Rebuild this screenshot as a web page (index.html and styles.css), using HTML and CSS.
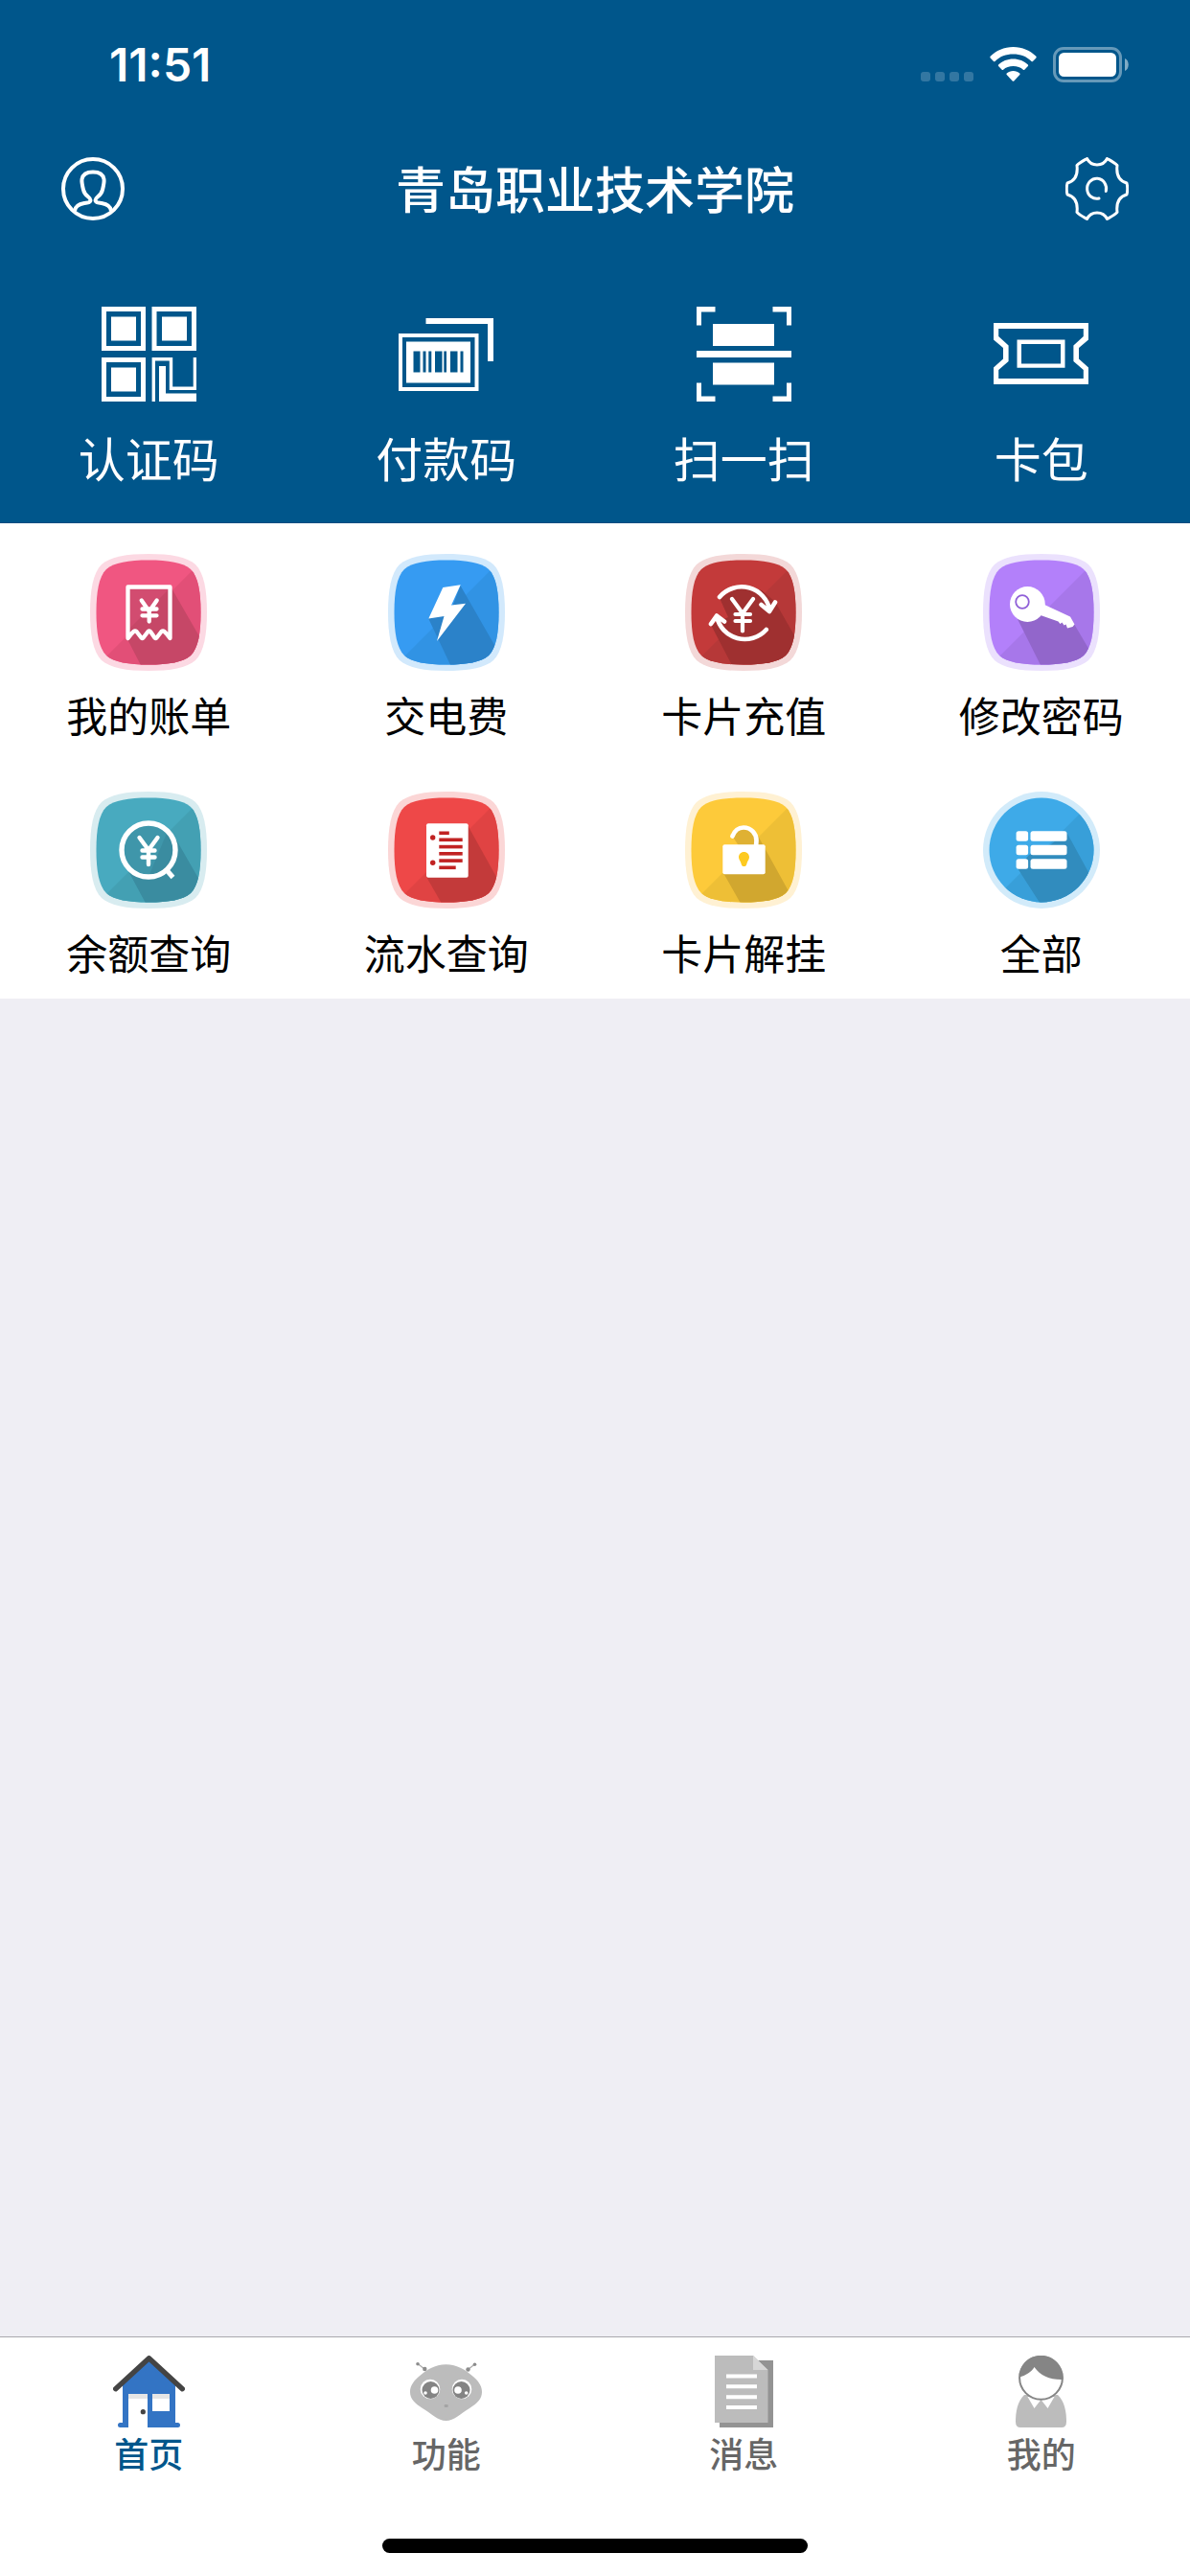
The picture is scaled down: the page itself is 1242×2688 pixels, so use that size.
FILE: index.html
```html
<!DOCTYPE html>
<html lang="zh-Hans">
<head>
  <meta charset="UTF-8" />
  <meta name="viewport" content="width=device-width, initial-scale=1.0" />
  <title>青岛职业技术学院</title>
  <link rel="stylesheet" href="styles.css">
</head>
<body>
  <!-- 共用图形 -->
  <svg class="defs" width="0" height="0" aria-hidden="true">
    <defs>
      <path id="tile" d="M61 0C84 0 101 3 110 11C119 20 122 38 122 61C122 84 119 102 110 111C101 119 84 122 61 122C38 122 21 119 12 111C3 102 0 84 0 61C0 38 3 20 12 11C21 3 38 0 61 0Z" />
      <path id="tileInner" d="M61 6.500C82 6.500 97 9 105 16C113 24 115.500 40 115.500 61C115.500 82 113 98 105 106C97 113 82 115.500 61 115.500C40 115.500 25 113 17 106C9 98 6.500 82 6.500 61C6.500 40 9 24 17 16C25 9 40 6.500 61 6.500Z" />
      <clipPath id="tileClip"><use href="#tileInner" /></clipPath>
      <clipPath id="roundClip"><circle cx="61" cy="61" r="54.5" /></clipPath>
    </defs>
  </svg>

  <div class="app">
    <header class="header">
      <div class="status-bar">
        <span class="time">11:51</span>
        <div class="status-icons">
          <svg width="55" height="37" viewBox="0 0 55 37" fill="#fff" fill-opacity=".2">
            <rect x="0" y="26" width="10" height="10" rx="3" />
            <rect x="15" y="26" width="10" height="10" rx="3" />
            <rect x="30" y="26" width="10" height="10" rx="3" />
            <rect x="45" y="26" width="10" height="10" rx="3" />
          </svg>
          <svg width="49" height="37" viewBox="0 0 49 37" fill="#fff">
            <path d="M24.500 0C34 0 42.500 3.800 48.400 9.800Q49 10.600 48.400 11.400L45 15Q44.300 15.600 43.500 15C38.500 10 32 7.600 24.500 7.600C17 7.600 10.500 10 5.500 15Q4.700 15.600 4 15L.6 11.400Q0 10.600 .6 9.800C6.500 3.800 15 0 24.500 0Z" />
            <path d="M24.500 12.500C30.500 12.500 36 14.700 39.900 18.500Q40.500 19.200 39.900 20L36.300 23.700Q35.600 24.300 34.900 23.700C32.200 21.300 28.600 20 24.500 20C20.400 20 16.800 21.300 14.100 23.700Q13.400 24.300 12.700 23.700L9.100 20Q8.500 19.200 9.100 18.500C13 14.700 18.500 12.500 24.500 12.500Z" />
            <path d="M24.500 25C27.200 25 29.500 26 31.300 27.600Q31.900 28.300 31.300 29L25.300 35.500Q24.500 36.200 23.700 35.500L17.700 29Q17.100 28.300 17.700 27.600C19.500 26 21.800 25 24.500 25Z" />
          </svg>
          <svg width="79" height="37" viewBox="0 0 79 37">
            <rect x="1.500" y="1.500" width="69" height="34" rx="9.500" fill="none" stroke="#fff" stroke-opacity=".4" stroke-width="3" />
            <rect x="6" y="6" width="60" height="25" rx="5.500" fill="#fff" />
            <path d="M75 12C80 14 80 23 75 25Z" fill="#fff" fill-opacity=".5" />
          </svg>
        </div>
      </div>

      <div class="nav-bar">
        <button type="button" class="icon-btn" aria-label="个人">
          <svg width="66" height="66" viewBox="0 0 66 66" fill="none" stroke="#fff" stroke-width="4">
            <circle cx="33" cy="33" r="31" />
            <path d="M14 56C14.500 51 18 49 24 48C28 47.400 30.500 47.500 30.500 45C30.500 41.500 24.500 41 23 34C22 30 21 26 21.500 23C22.500 17.500 27 15.500 33 15.500C39 15.500 43.500 17.500 44.500 23C45 26 44 30 43 34C41.500 41 35.500 41.500 35.500 45C35.500 47.500 38 47.400 42 48C48 49 51.500 51 52 56" />
          </svg>
        </button>
        <h1 class="title">青岛职业技术学院</h1>
        <button type="button" class="icon-btn" aria-label="设置">
          <svg width="66" height="66" viewBox="0 0 66 66" fill="none" stroke="#fff" stroke-width="3" stroke-linejoin="round" stroke-linecap="round">
            <path d="M22.500 1.500C25 6.500 29 8 33 8C37 8 41 6.500 43.500 1.500C47 3.500 51 5.500 54 8.500C53 17 55 24.500 64 27C65 31 65 35 64 39C55 41.500 53 49 54 57.500C51 60.500 47 62.500 43.500 64.500C41 59.500 37 58 33 58C29 58 25 59.500 22.500 64.500C19 62.500 15 60.500 12 57.500C13 49 11 41.500 2 39C1 35 1 31 2 27C11 24.500 13 17 12 8.500C15 5.500 19 3.500 22.500 1.500Z" />
            <path d="M42.300 35.500A10 10.500 0 1 0 35 43" />
          </svg>
        </button>
      </div>

      <nav class="quick">
        <a href="#" class="quick-item">
          <svg width="99" height="99" viewBox="0 0 99 99" fill="#fff">
            <g fill="none" stroke="#fff" stroke-width="5">
              <rect x="2.500" y="2.500" width="41" height="41" />
              <rect x="55" y="2.500" width="41.500" height="41" />
              <rect x="2.500" y="55.500" width="41" height="41" />
            </g>
            <rect x="10" y="10.500" width="26" height="25" />
            <rect x="63" y="10.500" width="26" height="25" />
            <rect x="10" y="63.500" width="26" height="25" />
            <path d="M54.300 99V54.800H72.500V85.300H97.400V53" fill="none" stroke="#fff" stroke-width="3.400" />
            <path d="M60 62h7v28.500h32V99H60z" />
          </svg>
          <span>认证码</span>
        </a>
        <a href="#" class="quick-item">
          <svg width="99" height="99" viewBox="0 0 99 99" fill="#fff">
            <path d="M28.500 12H99V57H93V18H28.500Z" />
            <path d="M0 28H83.500V88H0ZM4 32V84H79.500V32Z" fill-rule="evenodd" />
            <path fill-rule="evenodd" d="M8 36.500H75V79.500H8ZM15.500 46.500V68.500H22.500V46.500ZM25.500 46.500V68.500H28.500V46.500ZM31.300 46.500V68.500H34.300V46.500ZM38 46.500V68.500H45.500V46.500ZM47.300 46.500V68.500H50V46.500ZM54 46.500V68.500H61.500V46.500ZM64.500 46.500V68.500H67.500V46.500Z" />
          </svg>
          <span>付款码</span>
        </a>
        <a href="#" class="quick-item">
          <svg width="99" height="99" viewBox="0 0 99 99" fill="#fff">
            <path d="M0 0H19.500V5.500H5V19.500H0ZM79.500 0H99V19.500H94V5.500H79.500ZM0 79.500H5V93.500H19.500V99H0ZM94 79.500H99V99H79.500V93.500H94Z" />
            <rect x="17" y="18" width="64" height="23" />
            <rect x="0" y="46" width="99" height="7" />
            <rect x="17" y="58.500" width="64" height="23" />
          </svg>
          <span>扫一扫</span>
        </a>
        <a href="#" class="quick-item">
          <svg width="99" height="99" viewBox="0 0 99 99" fill="#fff" fill-rule="evenodd">
            <path d="M0 17H99V34.500L89 43V54.500L99 63.500V81H0V63.500L10 54.500V43L0 34.500ZM5.200 23V31L15.600 40.500V57L5.200 66V75H93.800V66L83.400 57V40.500L93.800 31V23Z" />
            <path d="M24.500 34.500H74.500V63.700H24.500ZM29 39V59.500H70V39Z" />
          </svg>
          <span>卡包</span>
        </a>
      </nav>
    </header>

    <main class="content">
      <div class="grid">
        <a href="#" class="grid-item">
          <svg width="122" height="122" viewBox="0 0 122 122">
            <use href="#tile" fill="#fcd9e3" />
            <g clip-path="url(#tileClip)">
              <rect width="122" height="122" fill="#f05681" />
              <path d="M122 2V122H2Z" fill="#e24f77" />
              <path d="M40 36L84 34L126 107V122H56L40 91Z" fill="#c64767" />
              <path d="M40 35H84L40 79Z" fill="#d24c70" />
            </g>
            <g fill="none" stroke="#fff" stroke-width="4.300" stroke-linejoin="round" stroke-linecap="round">
              <path d="M39.500 88V34.500H83.500V88Q80 83 77.500 81Q76 79.800 74.500 81L69.500 87.500Q68.500 88.500 67.500 87.500L63 81Q61.700 79.800 60.500 81L55.500 87.500Q54.500 88.500 53.500 87.500L48.500 81Q47 79.800 45.500 81Q43 83 39.500 88Z" />
              <path d="M53.700 48.500L61.700 60L69.700 48.500M61.700 60V70.500M54.500 57.500H69.500M54.500 64.300H69.500" />
            </g>
          </svg>
          <span>我的账单</span>
        </a>
        <a href="#" class="grid-item">
          <svg width="122" height="122" viewBox="0 0 122 122">
            <use href="#tile" fill="#d2e9fc" />
            <g clip-path="url(#tileClip)">
              <rect width="122" height="122" fill="#369bf2" />
              <path d="M122 2V122H2Z" fill="#3193e4" />
              <path d="M75.500 33L122 114V122H68L42 67L66 58Z" fill="#2b82c9" />
            </g>
            <path d="M57.300 35L75.700 32.300L66 53.500L81 51.700L51 91L58.500 65L42.300 67.500Z" fill="#fff" />
          </svg>
          <span>交电费</span>
        </a>
        <a href="#" class="grid-item">
          <svg width="122" height="122" viewBox="0 0 122 122">
            <use href="#tile" fill="#f3d8d8" />
            <g clip-path="url(#tileClip)">
              <rect width="122" height="122" fill="#c33a3a" />
              <path d="M122 2V122H2Z" fill="#b63838" />
              <path d="M36 46L60 33L80 38L94 50L122 99V122H52L27 74L45 66Z" fill="#9f3030" />
            </g>
            <g fill="none" stroke="#fff" stroke-width="4.600" stroke-linejoin="round" stroke-linecap="round">
              <path d="M36 45A30 30 0 0 1 88.500 59M79.500 53L88 60L94 50.500" />
              <path d="M84.800 79A30 30 0 0 1 33 65M27 73L33 64.500L41 70.500" />
              <path d="M49 47L60 62L71 47M60 62V80.500M52.500 63H68M52.500 70H68" stroke-width="4.200" />
            </g>
          </svg>
          <span>卡片充值</span>
        </a>
        <a href="#" class="grid-item">
          <svg width="122" height="122" viewBox="0 0 122 122">
            <use href="#tile" fill="#ebe1fd" />
            <g clip-path="url(#tileClip)">
              <rect width="122" height="122" fill="#b380fa" />
              <path d="M122 2V122H2Z" fill="#a777ea" />
              <path d="M36 68L64 55L95 73L122 119V122H63Z" fill="#9266cb" />
            </g>
            <circle cx="46.400" cy="52.500" r="18.400" fill="#fff" />
            <path d="M62 52L91 65.500L95.500 73.500L93.500 76L88 77.500L86.500 73.500L84.500 74.500L82.500 71.500L80.500 73L78.500 70.500L60 64Z" fill="#fff" />
            <circle cx="41" cy="50" r="6.800" fill="#fff" stroke="#9060d8" stroke-width="1.800" />
          </svg>
          <span>修改密码</span>
        </a>
        <a href="#" class="grid-item">
          <svg width="122" height="122" viewBox="0 0 122 122">
            <use href="#tile" fill="#d8ecf0" />
            <g clip-path="url(#tileClip)">
              <rect width="122" height="122" fill="#48aabf" />
              <path d="M122 2V122H2Z" fill="#43a0b3" />
              <circle cx="61" cy="61" r="28" fill="#3f96aa" />
              <path d="M81 41L91 52L122 106V122H61L40 83L61 89Z" fill="#3a8ca0" />
            </g>
            <g fill="none" stroke="#fff" stroke-linejoin="round" stroke-linecap="round">
              <circle cx="61" cy="61" r="28" stroke-width="5.400" />
              <path d="M80 82L86.500 89.500" stroke-width="5" stroke-linecap="butt" />
              <path d="M51.500 48L61 61L70.500 48M61 61V76M54.500 61.500H67.500M54.500 68.500H67.500" stroke-width="4.400" />
            </g>
          </svg>
          <span>余额查询</span>
        </a>
        <a href="#" class="grid-item">
          <svg width="122" height="122" viewBox="0 0 122 122">
            <use href="#tile" fill="#fbd6d6" />
            <g clip-path="url(#tileClip)">
              <rect width="122" height="122" fill="#ee4848" />
              <path d="M122 2V122H2Z" fill="#e04343" />
              <path d="M83 35L122 105V122H59L40 89Z" fill="#c33a3a" />
            </g>
            <rect x="40" y="33.300" width="43.700" height="56.500" rx="2" fill="#fff" />
            <g fill="#c12222">
              <circle cx="46.700" cy="48" r="2.700" />
              <circle cx="46.700" cy="74.300" r="2.700" />
              <rect x="53.300" y="41.500" width="10.500" height="3.600" />
              <rect x="53.300" y="48.500" width="24.400" height="3.600" />
              <rect x="53.300" y="55.800" width="24.400" height="3.600" />
              <rect x="53.300" y="63" width="24.400" height="3.600" />
              <rect x="53.300" y="70.300" width="24.400" height="3.600" />
              <rect x="53.300" y="77.500" width="17.400" height="3.600" />
            </g>
          </svg>
          <span>流水查询</span>
        </a>
        <a href="#" class="grid-item">
          <svg width="122" height="122" viewBox="0 0 122 122">
            <use href="#tile" fill="#fff1d3" />
            <g clip-path="url(#tileClip)">
              <rect width="122" height="122" fill="#fdca3a" />
              <path d="M122 2V122H2Z" fill="#eebf36" />
              <path d="M49 46Q53 38 61 38Q70 39 74 46V58H57Z" fill="#dfb133" />
              <path d="M76 46L118 122H61L40 85L76 60Z" fill="#d1a72f" />
            </g>
            <path d="M49.500 46.500C52 40 56 37.500 61 37.500C69 37.500 74.500 44 74.500 51L74 58" fill="none" stroke="#fff" stroke-width="4.700" stroke-linecap="round" />
            <rect x="39.300" y="55.300" width="44.400" height="31" rx="2" fill="#fff" />
            <path d="M61.500 63C65 63 67 65.500 67 68.500C67 71 65 72.500 64.500 75C64 77.500 63 78 61.500 78C60 78 59 77.500 58.500 75C58 72.500 56 71 56 68.500C56 65.500 58 63 61.500 63Z" fill="#fdca20" />
          </svg>
          <span>卡片解挂</span>
        </a>
        <a href="#" class="grid-item">
          <svg width="122" height="122" viewBox="0 0 122 122">
            <circle cx="61" cy="61" r="61" fill="#d2ebfa" />
            <g clip-path="url(#roundClip)">
              <rect width="122" height="122" fill="#3eaae8" />
              <path d="M122 2V122H2Z" fill="#389fd9" />
              <path d="M87 42L122 106V122H63L36 80L48 66L70 56Z" fill="#318cbe" />
            </g>
            <g fill="#fff">
              <rect x="34.600" y="41.300" width="12.500" height="10.400" rx="2.500" />
              <rect x="34.600" y="55.800" width="12.500" height="10.400" rx="2.500" />
              <rect x="34.600" y="70.300" width="12.500" height="10.400" rx="2.500" />
              <rect x="49.500" y="41.300" width="38" height="10.400" rx="2.500" />
              <rect x="49.500" y="55.800" width="38" height="10.400" rx="2.500" />
              <rect x="49.500" y="70.300" width="38" height="10.400" rx="2.500" />
            </g>
          </svg>
          <span>全部</span>
        </a>
      </div>
    </main>

    <footer class="footer">
      <nav class="tab-bar">
        <a href="#" class="tab active">
          <svg width="75" height="75" viewBox="0 0 75 75">
            <path d="M37.500 4L65 30V70H67.500Q70 70 70 72.500T67.500 75H7.500Q5 75 5 72.500T7.500 70H10V30Z" fill="#3374c4" />
            <path d="M2.700 34.700L37.500 2.800L72.300 34.700" fill="none" stroke="#444" stroke-width="5.400" stroke-linecap="round" stroke-linejoin="round" />
            <path d="M16 40H36V75H16ZM41 40H59V58H41Z" fill="#fff" />
            <path d="M16 40H36V45H16ZM41 40H59V45H41Z" fill="#e5e5e5" />
            <circle cx="31.300" cy="58.700" r="2.600" fill="#444" />
          </svg>
          <span>首页</span>
        </a>
        <a href="#" class="tab">
          <svg width="75" height="75" viewBox="0 0 75 75">
            <path d="M8 8.500L15 14M67.500 9L60.500 14.500" stroke="#aaa" stroke-width="1.200" />
            <g fill="#8c8c8c">
              <circle cx="8" cy="8.700" r="1.800" /><circle cx="15.300" cy="14" r="2.200" />
              <circle cx="67.500" cy="9.200" r="1.800" /><circle cx="60.500" cy="14.500" r="2.200" />
            </g>
            <path d="M37.500 9.300C49 9.300 58 15 66 22C73 28 75 33 75 38C75 45 70 50 62 55C52 61 46 68 37.500 68C29 68 23 61 13 55C5 50 0 45 0 38C0 33 2 28 9 22C17 15 26 9.300 37.500 9.300Z" fill="#bcbcbc" />
            <circle cx="21" cy="35" r="10.300" fill="#fff" /><circle cx="54" cy="35" r="10.300" fill="#fff" />
            <circle cx="21.500" cy="36" r="9" fill="#848484" /><circle cx="53.500" cy="36" r="9" fill="#848484" />
            <g fill="#fff">
              <circle cx="25.500" cy="36" r="3.800" /><circle cx="50" cy="36" r="3.800" />
              <circle cx="16" cy="39" r="1.800" /><circle cx="58.700" cy="39" r="1.800" />
            </g>
            <rect x="35.700" y="51" width="4" height="3" rx="1" fill="#a4a4a4" />
          </svg>
          <span>功能</span>
        </a>
        <a href="#" class="tab">
          <svg width="75" height="75" viewBox="0 0 75 75">
            <rect x="12" y="5" width="56" height="70" fill="#939393" />
            <path d="M7 0H47L62.500 15V70H7Z" fill="#bcbcbc" />
            <path d="M47 0L62.500 15H47Z" fill="#d7d7d7" />
            <path d="M19 21.500H51M19 32.300H51M19 43.200H51M19 54H51" stroke="#fff" stroke-width="4" />
          </svg>
          <span>消息</span>
        </a>
        <a href="#" class="tab">
          <svg width="75" height="75" viewBox="0 0 75 75">
            <path d="M20 41H55C62 48 64 58 64 69Q64 75 59 75H16Q11 75 11 69C11 58 13 48 20 41Z" fill="#bcbcbc" />
            <path d="M23.500 43L30.500 55L37.500 46L44.500 55L51.500 43Z" fill="#fff" />
            <circle cx="37.500" cy="23.300" r="22.400" fill="#fff" stroke="#858585" stroke-width="2" />
            <path d="M15 22.500C15 9 25 0 37.500 0C50 0 60.500 10 60.500 25C47 25.500 37 21 30.500 12C28 17 21 21 15 22.500Z" fill="#858585" />
          </svg>
          <span>我的</span>
        </a>
      </nav>
      <div class="home-indicator"></div>
    </footer>
  </div>
</body>
</html>
```

FILE: styles.css
```css
* {
  box-sizing: border-box;
}

body {
  margin: 0;
  font-family: "Noto Sans CJK SC", sans-serif;
  background-color: #efeef4;
}

a {
  color: inherit;
  text-decoration: none;
}

svg {
  display: block;
  flex: none;
}

.defs {
  position: absolute;
}

.app {
  display: flex;
  flex-direction: column;
  min-height: 100vh;
}

/* 顶部 */
.header {
  background-color: #00568b;
  border-bottom: 1px solid #004c80;
  color: #fff;
}

.status-bar {
  display: flex;
  justify-content: space-between;
  align-items: center;
  height: 134px;
  padding: 0 64px 0 114px;
}

.time {
  font-family: Inter, sans-serif;
  font-size: 48px;
  font-weight: 600;
}

.status-icons {
  display: flex;
  gap: 17px;
}

.nav-bar {
  display: flex;
  justify-content: space-between;
  align-items: center;
  height: 126px;
  padding: 0 64px;
}

.icon-btn {
  padding: 0;
  border: none;
  background: none;
}

.title {
  margin: 0;
  padding-bottom: 2px;
  font-size: 52px;
  font-weight: 500;
  line-height: 60px;
}

.quick {
  display: grid;
  grid-template-columns: repeat(4, 1fr);
  padding: 60px 0 38px;
}

.quick-item {
  display: flex;
  flex-direction: column;
  align-items: center;
  gap: 28px;
  font-size: 49px;
  line-height: 60px;
}

/* 功能列表 */
.content {
  flex: 1;
}

.grid {
  display: grid;
  grid-template-columns: repeat(4, 1fr);
  background-color: #fff;
  color: #000;
}

.grid-item {
  display: flex;
  flex-direction: column;
  align-items: center;
  gap: 20px;
  padding: 32px 0 24px;
  font-size: 43px;
  line-height: 50px;
}

/* 底部导航 */
.footer {
  background-color: #fff;
  border-top: 1px solid #a9a9ad;
}

.tab-bar {
  display: grid;
  grid-template-columns: repeat(4, 1fr);
  padding-top: 19px;
}

.tab {
  display: flex;
  flex-direction: column;
  align-items: center;
  gap: 4px;
  font-size: 36px;
  font-weight: 500;
  line-height: 44px;
  color: #666;
}

.tab.active {
  color: #00568b;
}

.home-indicator {
  width: 444px;
  height: 15px;
  margin: 68px auto 24px;
  border-radius: 8px;
  background-color: #000;
}
```
